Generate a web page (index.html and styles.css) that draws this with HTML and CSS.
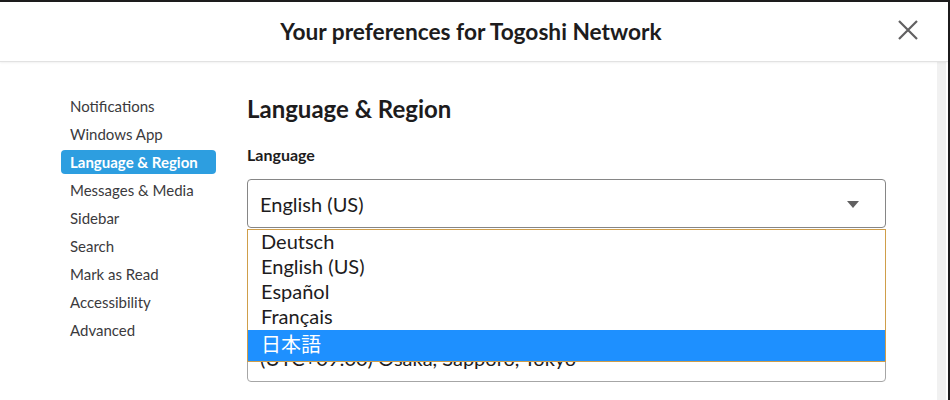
FILE: index.html
```html
<!DOCTYPE html>
<html lang="en">
<head>
<meta charset="utf-8">
<title>Preferences</title>
<link rel="stylesheet" href="styles.css">
</head>
<body>
<div class="window">
  <header class="header">
    <h1 class="title">Your preferences for Togoshi Network</h1>
    <button class="close" aria-label="Close">
      <svg width="22" height="22" viewBox="0 0 22 22"><path d="M2 2 L20 20 M20 2 L2 20" stroke="#616061" stroke-width="2.2" fill="none"/></svg>
    </button>
  </header>
  <div class="body">
    <div class="content">
      <nav class="sidebar">
        <div class="nav-item">Notifications</div>
        <div class="nav-item">Windows App</div>
        <div class="nav-item active">Language &amp; Region</div>
        <div class="nav-item">Messages &amp; Media</div>
        <div class="nav-item">Sidebar</div>
        <div class="nav-item">Search</div>
        <div class="nav-item">Mark as Read</div>
        <div class="nav-item">Accessibility</div>
        <div class="nav-item">Advanced</div>
      </nav>
      <main class="main">
        <h2 class="heading">Language &amp; Region</h2>
        <div class="label">Language</div>
        <div class="select-wrap">
          <div class="select">
            <span>English (US)</span>
            <svg class="caret" width="12" height="7" viewBox="0 0 12 7"><path d="M0 0 H12 L6 7 Z" fill="#616061"/></svg>
          </div>
          <ul class="dropdown">
            <li class="option">Deutsch</li>
            <li class="option">English (US)</li>
            <li class="option">Español</li>
            <li class="option">Français</li>
            <li class="option selected">日本語</li>
          </ul>
        </div>
        <div class="select select-tz"><span>(UTC+09:00) Osaka, Sapporo, Tokyo</span></div>
      </main>
    </div>
    <div class="scrollbar"></div>
  </div>
</div>
</body>
</html>
```
FILE: styles.css
```css
* { box-sizing: border-box; }
html, body { margin: 0; padding: 0; }
body {
  background: #1d1c1d;
  font-family: Lato, "Noto Sans", sans-serif;
  color: #1d1c1d;
  width: 950px;
  height: 400px;
  overflow: hidden;
}
.window {
  margin-top: 2px;
  width: 948px;
  height: 398px;
  background: #fff;
  display: flex;
  flex-direction: column;
}
.header {
  height: 60px;
  flex: none;
  border-bottom: 1px solid #e2e2e2;
  box-shadow: 0 1px 2px rgba(0,0,0,0.06);
  display: flex;
  align-items: center;
  justify-content: center;
  position: relative;
}
.title {
  margin: 0 0 0 -6px;
  font-size: 22.7px;
  font-weight: 700;
  line-height: 28px;
  color: #1d1c1d;
}
.close {
  position: absolute;
  right: 29px;
  top: 17px;
  width: 22px;
  height: 22px;
  padding: 0;
  border: 0;
  background: none;
}
.body {
  flex: 1;
  display: flex;
  min-height: 0;
}
.content {
  width: 937px;
  display: flex;
  padding: 32px 0 0 61px;
  overflow: hidden;
}
.scrollbar {
  width: 9px;
  background: #f1f1f1;
  margin-right: 2px;
}
.sidebar {
  width: 155px;
  flex: none;
  display: flex;
  flex-direction: column;
  gap: 4px;
}
.nav-item {
  height: 24px;
  line-height: 24px;
  padding-left: 9px;
  font-size: 15px;
  color: #3b3a3d;
  border-radius: 4px;
}
.nav-item.active {
  background: #2d9ee0;
  color: #fff;
  font-weight: 700;
}
.main {
  margin-left: 31px;
  width: 639px;
  flex: none;
  padding-top: 1px;
}
.heading {
  margin: 0;
  font-size: 24px;
  font-weight: 700;
  line-height: 28px;
}
.label {
  margin-top: 22px;
  font-size: 16px;
  font-weight: 700;
  line-height: 20px;
}
.select-wrap {
  position: relative;
  margin-top: 14px;
}
.select {
  height: 49px;
  border: 1px solid #868686;
  border-radius: 4px;
  display: flex;
  align-items: center;
  justify-content: space-between;
  padding: 0 26px 0 12px;
  font-size: 20px;
}
.caret { margin-top: 1px; }
.dropdown {
  position: absolute;
  left: 0;
  right: 0;
  top: 50px;
  margin: 0;
  padding: 0;
  list-style: none;
  background: #fff;
  border: 1px solid #cf9e4a;
  z-index: 2;
}
.option {
  height: 25px;
  line-height: 22px;
  padding-left: 13px;
  font-size: 20px;
  color: #1d1c1d;
}
.option.selected {
  height: 31px;
  line-height: 29px;
  background: #1e90ff;
  color: #fff;
  font-family: Lato, "Noto Sans CJK JP", sans-serif;
}
.select-tz {
  margin-top: 105px;
  border-color: #a6a6a6;
}
```
